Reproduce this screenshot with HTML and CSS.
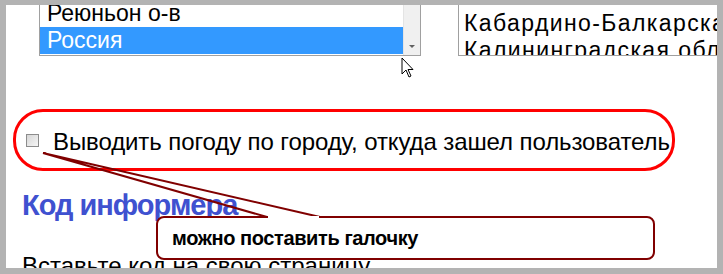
FILE: index.html
```html
<!DOCTYPE html>
<html lang="ru">
<head>
    <meta charset="UTF-8">
    <title>Информер погоды</title>
    <link rel="stylesheet" href="styles.css">
</head>
<body>
    <div class="shot">
        <div class="lists">
            <div class="listbox countries">
                <div class="rows">
                    <div class="row">Реюньон о-в</div>
                    <div class="row selected">Россия</div>
                </div>
                <div class="scrollbar"><span class="arrow-down"></span></div>
            </div>
            <div class="listbox regions">
                <div class="row">Кабардино-Балкарская Республика</div>
                <div class="row">Калининградская область</div>
            </div>
        </div>

        <label class="weather-opt">
            <span class="checkbox"></span>
            <span class="opt-text">Выводить погоду по городу, откуда зашел пользователь</span>
        </label>

        <h2 class="informer-title">Код информера</h2>
        <p class="hint">Вставьте код на свою страницу .</p>

        <!-- annotation callout -->
        <svg class="callout" width="723" height="274" viewBox="0 0 723 274">
            <rect x="157" y="217" width="497" height="42" rx="7" fill="#fff" stroke="#800000" stroke-width="2"/>
            <polyline points="267,217 43,153 320,217" fill="none" stroke="#800000" stroke-width="2"/>
            <line x1="268" y1="217" x2="319" y2="217" stroke="#fff" stroke-width="2"/>
            <text x="172" y="245" class="callout-text">можно поставить галочку</text>
        </svg>

        <svg class="cursor" width="14" height="22" viewBox="0 0 14 22">
            <path d="M1 1 L1 17 L5 13 L8 20 L10 19 L7 12.5 L12 12.5 Z" fill="#fff" stroke="#000" stroke-width="1" stroke-linejoin="round"/>
        </svg>
    </div>
</body>
</html>
```

FILE: styles.css
```css
body {
    margin: 0;
    background: #fff;
    font-family: "Liberation Sans", Arial, sans-serif;
}
.shot {
    position: relative;
    width: 723px;
    height: 274px;
    box-sizing: border-box;
    border-style: solid;
    border-color: #b3b3b3;
    border-width: 5px 6px 6px 6px;
    overflow: hidden;
    background: #fff;
}
.lists {
    display: flex;
    margin-top: -5px;
    height: 56px;
}
.listbox {
    flex-shrink: 0;
    box-sizing: border-box;
    height: 56px;
    border: 1px solid #a0a0a0;
    border-top: none;
    font-size: 23px;
    overflow: hidden;
    background: #fff;
}
.countries {
    display: flex;
    margin-left: 33px;
    width: 382px;
}
.rows {
    flex: 1;
}
.row {
    height: 27px;
    line-height: 27px;
    white-space: nowrap;
    color: #000;
}
.countries .row {
    padding-left: 7px;
}
.row.selected {
    background: #3399ff;
    color: #fff;
}
.scrollbar {
    position: relative;
    width: 16px;
    background: #f0f0f0;
    border-left: 1px solid #e4e4e4;
}
.arrow-down {
    position: absolute;
    left: 5px;
    bottom: 7px;
    border-left: 3px solid transparent;
    border-right: 3px solid transparent;
    border-top: 3px solid #606060;
}
.regions {
    margin-left: 37px;
    width: 320px;
    padding: 10px 0 0 5px;
    letter-spacing: 1.4px;
}
.weather-opt {
    display: flex;
    align-items: center;
    gap: 14px;
    box-sizing: border-box;
    width: 662px;
    height: 62px;
    margin: 53px 0 0 7px;
    padding-left: 10px;
    border: 3px solid #ff0000;
    border-radius: 30px;
}
.checkbox {
    flex-shrink: 0;
    width: 11px;
    height: 11px;
    border: 1px solid #8c8c8c;
    background: linear-gradient(135deg, #d6d6d6, #f7f7f7);
}
.opt-text {
    font-size: 24px;
    padding-top: 4px;
    letter-spacing: -0.1px;
    white-space: nowrap;
}
.informer-title {
    margin: 17px 0 0 16px;
    font-size: 29px;
    line-height: 34px;
    letter-spacing: -1px;
    color: #3f51d0;
}
.hint {
    margin: 30px 0 0 16px;
    font-size: 24px;
    line-height: 28px;
}
.callout {
    position: absolute;
    left: -6px;
    top: -5px;
}
.callout-text {
    font-family: "Liberation Sans", Arial, sans-serif;
    font-size: 20px;
    font-weight: bold;
    letter-spacing: -0.4px;
    fill: #000;
}
.cursor {
    position: absolute;
    left: 395px;
    top: 52px;
}
```
